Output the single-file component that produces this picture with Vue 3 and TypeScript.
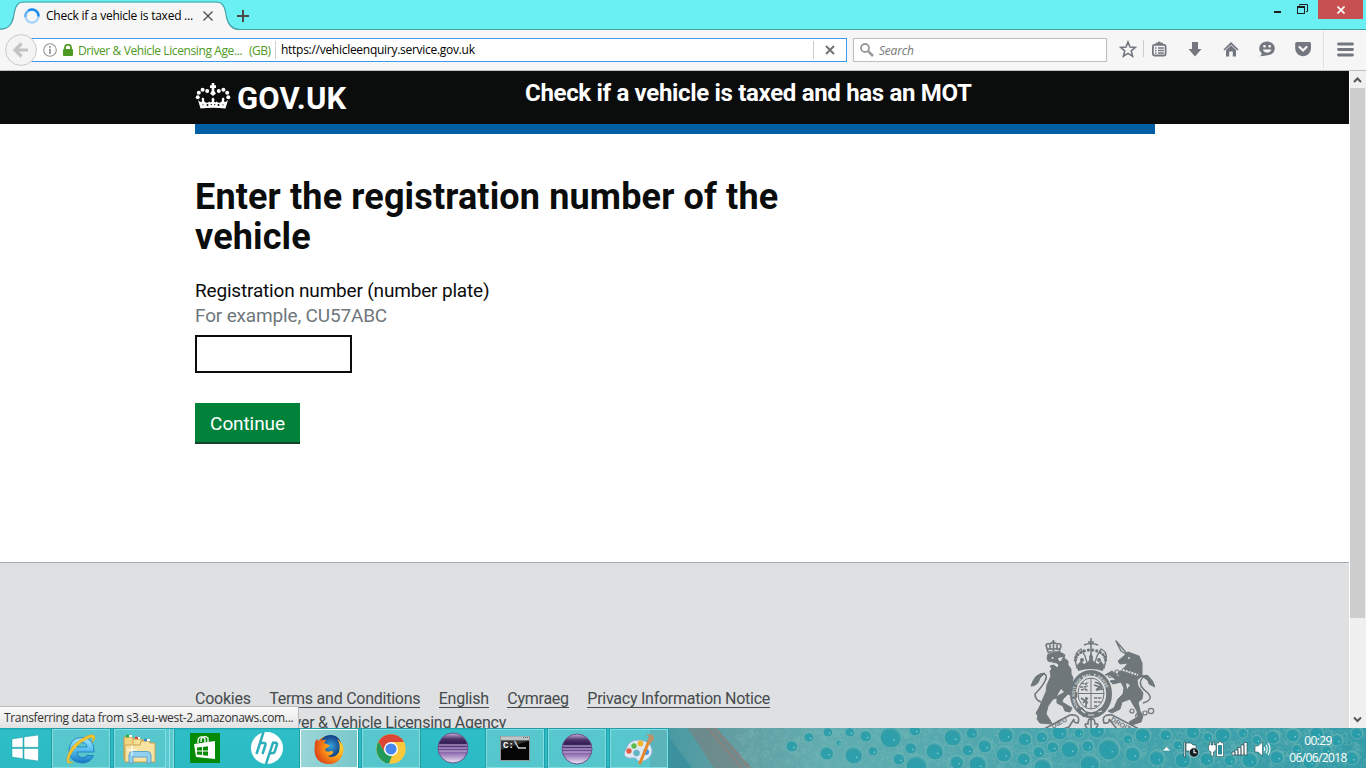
<script setup lang="ts">
import { ref } from 'vue'

interface Bubble { x: number; y: number; r: number }

const registration = ref('')
const footerLinks: string[] = ['Cookies', 'Terms and Conditions', 'English', 'Cymraeg', 'Privacy Information Notice']

const bigBubbles: Bubble[] = [
  [109, 9, 5], [128, 4, 5], [150, 4, 5], [166, 8, 6], [191, 9, 11], [215, 2, 6], [92, 18, 6], [139, 15, 3], [127, 25, 7],
  [154, 27, 9], [173, 23, 5], [211, 20, 6], [199, 31, 6], [235, 23, 9], [253, 9, 9], [272, 5, 6], [268, 22, 6], [285, 18, 7],
  [257, 34, 7], [278, 36, 9], [217, 38, 11], [306, 7, 8], [304, 26, 8], [325, 11, 7], [324, 31, 7], [342, 9, 6], [339, 24, 6],
  [360, 4, 8], [353, 19, 6], [370, 21, 9], [379, 5, 5], [388, 18, 6], [397, 2, 8], [409, 21, 11], [390, 36, 10], [428, 11, 5],
  [433, 26, 8], [443, 7, 8], [343, 39, 9], [466, 7, 6], [478, 17, 5], [493, 4, 7], [508, 9, 5], [523, 7, 8], [543, 5, 5],
  [557, 12, 5], [573, 9, 7], [593, 7, 7], [617, 5, 7], [637, 12, 6], [657, 5, 6], [457, 30, 8], [483, 32, 8], [507, 31, 7],
  [530, 32, 6], [550, 32, 8], [577, 29, 7], [597, 21, 5], [610, 34, 7], [627, 22, 5], [652, 30, 7],
].map(([x, y, r]) => ({ x, y, r }))

const foam: Bubble[] = []
let seed = 17
const rand = (): number => {
  seed = (seed * 16807) % 2147483647
  return seed / 2147483647
}
for (let i = 0; i < 900; i++) {
  foam.push({ x: 40 + rand() * 626, y: rand() * 40, r: 0.6 + rand() * 2.2 })
}

const beads = Array.from({ length: 12 }, (_, i) => {
  const a = Math.PI + (Math.PI * i) / 11
  return { x: 60.5 + 15 * Math.cos(a), y: 22 + 10 * Math.sin(a) }
})
</script>

<template>
  <div class="desktop">
    <div class="window">
      <header class="titlebar">
        <svg class="tab-shape" width="240" height="31" viewBox="0 0 240 31">
          <path d="M0 29.5C9 29.5 12 24 13.500 17C15 7 17 2.500 24 2.500H216C223 2.500 225 7 226.500 17C228 24 231 29.500 240 29.500V31H0Z" fill="#f6f6f6" />
          <path d="M0 29C9 29 12 24 13.500 17C15 7 17 2 24 2H216C223 2 225 7 226.500 17C228 24 231 29.500 240 29.500" fill="none" stroke="#459fa4" stroke-width="1.200" />
        </svg>
        <div class="tab">
          <svg width="16" height="16" viewBox="0 0 16 16" fill="none" stroke-width="2.400">
            <circle cx="8" cy="8" r="6.500" stroke="#a9d4f8" />
            <path d="M4 2.900A6.500 6.500 0 0 1 14.500 8.500" stroke="#1a8cf0" />
            <path d="M4 2.900A6.500 6.500 0 0 0 1.500 9" stroke="#62b2f5" />
          </svg>
          <span class="tab-title">Check if a vehicle is taxed ...</span>
          <svg class="tab-close" width="10" height="10" viewBox="0 0 10 10"><path d="M.5.5L9.500 9.500M9.500.5L.5 9.500" stroke="#4d4d4d" stroke-width="1.300" /></svg>
        </div>
        <svg class="plus" width="12" height="12" viewBox="0 0 12 12"><path d="M6 0V12M0 6H12" stroke="#4a4a4a" stroke-width="2" /></svg>
        <div class="controls">
          <svg width="36" height="16" viewBox="0 0 36 16">
            <path d="M2 12H9" stroke="#1f1f1f" stroke-width="2" />
            <path d="M27.500 5.500V4.500H35.500V11.500H34" stroke="#1f1f1f" fill="none" />
            <rect x="25.500" y="6.500" width="7" height="7" fill="none" stroke="#1f1f1f" /><path d="M25 7H33" stroke="#1f1f1f" stroke-width="2" />
          </svg>
          <button class="close" aria-label="Close">
            <svg width="8" height="8" viewBox="0 0 8 8"><path d="M.5.5L7.500 7.500M7.500.5L.5 7.500" stroke="#fff" stroke-width="1.700" /></svg>
          </button>
        </div>
      </header>

      <nav class="navbar">
        <div class="address">
          <svg class="back" width="32" height="32" viewBox="0 0 32 32">
            <circle cx="16" cy="16" r="15.400" fill="#f4f4f4" stroke="#cacaca" />
            <path d="M9.500 16H23M16.500 9.500L10 16L16.500 22.500" fill="none" stroke="#c3c3c3" stroke-width="3.200" />
          </svg>
          <svg class="info" width="14" height="14" viewBox="0 0 14 14"><circle cx="7" cy="7" r="6.300" fill="none" stroke="#969696" stroke-width="1.100" /><path d="M7 3V4.800M7 5.800V11" stroke="#8c8c8c" stroke-width="1.600" /></svg>
          <svg class="lock" width="10" height="12" viewBox="0 0 10 12"><rect y="5" width="10" height="7" rx="1" fill="#4d9a24" /><path d="M2 6V3.500A3 2.800 0 0 1 8 3.500V6" fill="none" stroke="#4d9a24" stroke-width="1.800" /></svg>
          <span class="owner">Driver &amp; Vehicle Licensing Age...</span>
          <span class="country">(GB)</span>
          <span class="url">https://vehicleenquiry.service.gov.uk</span>
          <span class="stop"><svg width="10" height="10" viewBox="0 0 10 10"><path d="M1 1L9 9M9 1L1 9" stroke="#737373" stroke-width="2" /></svg></span>
        </div>
        <div class="search">
          <svg width="14" height="14" viewBox="0 0 14 14" fill="none" stroke="#999"><circle cx="5" cy="5" r="4" stroke-width="1.800" /><path d="M8.300 8.300L13 13" stroke-width="2.500" /></svg>
          <span>Search</span>
        </div>
        <svg class="tools" width="253" height="39" viewBox="0 0 253 39">
          <path d="M15 12L17 17L22.300 17.400L18.300 20.900L19.600 26.200L15 23.400L10.400 26.200L11.700 20.900L7.700 17.400L13 17Z" fill="none" stroke="#737780" stroke-width="1.600" />
          <path d="M30.500 10V27" stroke="#cbcdd0" />
          <rect x="39.900" y="14.900" width="12.700" height="10.600" rx="1.500" fill="none" stroke="#737780" stroke-width="1.800" />
          <path d="M42.500 15V12.800H44.500Q46.200 10 48 12.800H50V15Z" fill="#737780" />
          <path d="M42 18H43.500M45 18H50.800M42 20.500H43.500M45 20.500H50.800M42 23H43.500M45 23H50.800" stroke="#737780" stroke-width="1.300" />
          <path d="M79 12H85V19H88.500L82 26.500L75.500 19H79Z" fill="#737780" />
          <g transform="translate(4 0)">
            <path d="M107 20L114 13.300L121 20" fill="none" stroke="#737780" stroke-width="1.700" />
            <path d="M109 20L114 15.300L119 20V26.500H115.800V21.500H112.200V26.500H109Z" fill="#737780" />
            <path d="M150 11.500C154.500 11.500 157.800 14.500 157.800 18.500C157.800 22.800 154 25.200 150.500 25.200C149 25.200 146.500 26.200 143 26.200C144.500 25 145 24 144.500 23C143 21.800 142.300 20.500 142.300 18.500C142.300 14.500 145.500 11.500 150 11.500Z" fill="#737780" />
            <circle cx="147.500" cy="16.300" r="1.300" fill="#f6f6f6" /><circle cx="152.700" cy="16.300" r="1.300" fill="#f6f6f6" /><path d="M145.800 19.500H154.500C153.500 23.600 146.800 23.600 145.800 19.500Z" fill="#f6f6f6" />
          </g>
          <g transform="translate(8 0)">
            <path d="M176 12H188.500Q190 12 190 13.500V18C190 23 186 26.200 182.200 26.200C178 26.200 174.200 23 174.200 18V13.500Q174.200 12 176 12Z" fill="#737780" />
            <path d="M178.500 17L182 20.500L185.500 17" fill="none" stroke="#f6f6f6" stroke-width="2.200" stroke-linecap="round" />
            <path d="M202.500 1V38" stroke="#dedede" />
            <path d="M217.500 14H231.500M217.500 19.500H231.500M217.500 25H231.500" stroke="#737780" stroke-width="2.800" stroke-linecap="round" />
          </g>
        </svg>
      </nav>

      <div class="viewport">
        <main class="page">
          <div class="gov-header">
            <div class="container head-row">
              <div class="brand">
                <svg width="36" height="27" viewBox="0 0 36 27" fill="#fff">
                  <path d="M5.500 25.600L3 17Q5 19.500 6.500 19L7 17.500Q5.800 15.500 8 14.600Q10 15.500 9 17.500L10 19.300Q12.500 20.500 14.500 18.500L15.500 19.500L17 18.500L16.500 16L18 14.500L19.500 16L19 18.500L20.500 19.500L21.500 18.500Q23.500 20.500 26 19.300L27 17.500Q26 15.500 28 14.600Q30.200 15.500 29 17.500L29.500 19Q31 19.500 33 17L30.500 25.600Q18 24 5.500 25.600Z" />
                  <path d="M18 0V10M15 3.600H21" stroke="#fff" stroke-width="2.600" />
                  <path d="M18 6.500L21 10.500L18 13L15 10.500Z" />
                  <circle cx="2.700" cy="14.200" r="2" /><circle cx="3.800" cy="9.800" r="2" /><circle cx="7.600" cy="6.800" r="2" /><circle cx="12.200" cy="8" r="2" />
                  <circle cx="33.300" cy="14.200" r="2" /><circle cx="32.200" cy="9.800" r="2" /><circle cx="28.400" cy="6.800" r="2" /><circle cx="23.800" cy="8" r="2" />
                  <g fill="#0b0c0c"><circle cx="12.500" cy="22" r="1" /><circle cx="23.500" cy="22" r="1" /><circle cx="16.300" cy="21.600" r=".7" /><circle cx="19.700" cy="21.600" r=".7" /><circle cx="8" cy="21.800" r=".6" /><circle cx="28" cy="21.800" r=".6" /></g>
                </svg>
                <span>GOV.UK</span>
              </div>
              <div class="service">Check if a vehicle is taxed and has an MOT</div>
            </div>
          </div>
          <div class="container content">
            <div class="bar"></div>
            <h1>Enter the registration number of the<br />vehicle</h1>
            <label for="vrm">Registration number (number plate)</label>
            <div class="hint">For example, CU57ABC</div>
            <input id="vrm" v-model="registration" type="text" />
            <button class="continue"><span>Continue</span></button>
          </div>
          <footer class="footer">
            <div class="container foot-row">
              <div>
                <div class="links"><a v-for="link in footerLinks" :key="link">{{ link }}</a></div>
                <div class="built">Built by the <a>Driver &amp; Vehicle Licensing Agency</a></div>
              </div>
              <svg class="arms" width="125" height="91" viewBox="0 0 125 91" fill="#6f777b">
                <g stroke="#6f777b" stroke-linejoin="round">
                  <path d="M18 14L16 7Q17 5 20 6L23 4L27 6Q31 5 31 8L29 14Z" fill="none" stroke-width="1.600" />
                  <path d="M23.500 2V13M18 11H30M20 7V12M27 7V12" fill="none" stroke-width="1.600" />
                  <path d="M18 16L30 14L35 17L34 20L38 23L38 27L41 31L41 36L43 40L42 47L39 50L37 57L33 61L32 64L37 67L42 70L40 74L35 73L33 68L27 65L27 60L23 61L18 68L16 76L20 82L22 86L10 85L7 81L8 78L6 75L9 70L12 63L16 54L17 47L21 38L20 33L22 31L20 28L24 27L27 30L29 27L27 25L18 23L17 20Z" stroke-width="1" />
                  <path d="M11 64Q5 62 5 56Q12 49 15 43Q18 37 14 36Q10 36 5 40" fill="none" stroke-width="1.600" /><path d="M15 35Q5 35 1 48Q8 48 10 40Z" />
                  <path d="M36 44L49 57L46 60L36 55Z" />
                  <path d="M86 3L99 18L91 13Z" fill="none" stroke-width="1.400" />
                  <path d="M98 14L109 18L112 25L112 38L107 42L108 48L113 55L112 61L108 64L110 73L113 78L111 84L102 87L99 84L108 79L107 73L104 68L100 61L92 64L90 71L82 75L78 73L84 70L88 61L93 56L94 50L91 44L83 46L80 43L86 42L80 37L75 37L82 33L90 40L88 35L95 29L98 25L90 26L88 23L94 18Z" stroke-width="1" />
                  <path d="M113 65Q124 62 118 55Q108 48 111 42Q115 35 119 39" fill="none" stroke-width="1.500" /><path d="M110 38Q121 35 125 49L119 46Q119 41 110 38Z" />
                </g>
                <g fill="#dee0e2"><circle cx="22.500" cy="20" r="1" /><path d="M28 20L33 19L31 23L29 23Z" /><circle cx="99" cy="20" r="1" /><path d="M31 51L27 58L34 54Z M96 45L100 47L97 51Z" /></g>
                <path d="M90 31L108 37" stroke="#dee0e2" stroke-width="2" stroke-dasharray="2 1" />
                <g fill="none" stroke="#6f777b" stroke-width="1.200"><circle cx="80" cy="38" r="1.500" /><circle cx="87" cy="34" r="2" /><circle cx="109" cy="53" r="2" /><circle cx="102" cy="73" r="2" /><circle cx="108" cy="78" r="2.300" /><circle cx="115" cy="75" r="2" /><circle cx="121" cy="73" r="2.700" /><circle cx="106" cy="65" r="2" /></g>
                <circle v-for="(bead, i) in beads" :key="i" :cx="bead.x" :cy="bead.y" r="1.600" />
                <path d="M61 0V30M58 4H64M54 7Q60.500 4 68 7" fill="none" stroke="#6f777b" stroke-width="1.500" />
                <path d="M47 30L45 22Q45 14 51 11L55 18L58 28L61 17L64 28L67 18L71 11Q78 14 76 22L74 30Z" fill="none" stroke="#6f777b" stroke-width="1.300" />
                <path d="M47 27L51 23L54 26L61 22L68 26L71 23L74 27L73 33Q61 29 48 33Z" />
                <circle cx="52" cy="22" r="2" /><circle cx="69" cy="22" r="2" /><circle cx="61" cy="19" r="2" />
                <ellipse cx="61" cy="56" rx="20" ry="23" fill="none" stroke="#6f777b" stroke-width="2" />
                <ellipse cx="61" cy="56" rx="17.500" ry="20.500" fill="none" stroke="#6f777b" stroke-width="4.600" />
                <path id="garter" d="M49 70A16.200 19 0 1 1 73 70" fill="none" />
                <text class="motto"><textPath href="#garter">HONI SOIT QUI MAL Y PENSE</textPath></text>
                <ellipse cx="61" cy="55.500" rx="14" ry="16.500" fill="#dee0e2" />
                <ellipse cx="61" cy="55.500" rx="13" ry="15.500" fill="none" stroke="#6f777b" />
                <path d="M61 40V71M48 55.500H74" stroke="#6f777b" stroke-width="1" />
                <g fill="none" stroke="#6f777b" stroke-width="1.700"><path d="M51 45L56 46L58 44M50 49H54L58 48M51 52L55 51L58 53M64 60H72M64 64H71M64 68H68" stroke-dasharray="3 .7" /><path d="M65 44L70 46L72 51L66 52L70 49L64 47M51 60L58 65M53 65L58 60M56 59V69" /></g>
                <path d="M47 70L52 69L57 75H64L70 70L76 73L68 79H53Z" /><path d="M51 72L55 75M58 77H64M68 74L72 73" stroke="#dee0e2" stroke-width="1.200" />
                <path d="M14 91L40 77Q51 76 48 85Q43 85 44 81L39 89L33 91ZM109 91L82 77Q71 76 74 85Q80 86 79 81L87 91Z" fill="#dee0e2" stroke="#6f777b" stroke-width="1.600" />
                <text class="dieu" transform="translate(23 91) rotate(-29)">DIEU</text><text class="dieu" transform="translate(80 83) rotate(29)">DROIT</text>
                <path d="M57 90Q53 85 58 86Q58 80 61 81Q65 80 65 86Q70 85 66 90M61 81V91" fill="none" stroke="#6f777b" stroke-width="1.600" />
              </svg>
            </div>
          </footer>
        </main>
        <div class="scrollbar">
          <svg width="17" height="17" viewBox="0 0 17 17"><path d="M4 11L7.500 7.500L11 11" fill="none" stroke="#555" stroke-width="2" /></svg>
          <div class="thumb"></div>
          <svg width="17" height="17" viewBox="0 0 17 17"><path d="M4 6.500L7.500 10L11 6.500" fill="none" stroke="#555" stroke-width="2" /></svg>
        </div>
        <div class="status"><span>Transferring data from s3.eu-west-2.amazonaws.com...</span></div>
      </div>
    </div>

    <div class="taskbar">
      <svg class="wallpaper" width="716" height="40" viewBox="-50 0 716 40">
        <defs>
          <linearGradient id="sea" x1="0" x2="1"><stop offset="0" stop-color="#4298a2" /><stop offset=".12" stop-color="#639fa3" /><stop offset=".25" stop-color="#61adb0" /><stop offset=".55" stop-color="#4aa5ad" /><stop offset="1" stop-color="#349ca8" /></linearGradient>
          <radialGradient id="bubble" cx=".45" cy=".6" r=".6"><stop offset="0" stop-color="#209fad" /><stop offset=".7" stop-color="#2b9ba7" /><stop offset="1" stop-color="#6ab6b7" /></radialGradient>
        </defs>
        <rect x="-50" width="716" height="40" fill="url(#sea)" />
        <path d="M-50 0H-38L-8 40H-50Z" fill="#3b929e" /><path d="M-12 0H16L52 40H14Z" fill="#79817f" opacity=".65" />
        <g stroke="#678f92" fill="none"><path d="M-8 0L22 40M0 0L32 40" /><path d="M8 0L42 40M15 0L50 40" stroke="#947d78" stroke-width="1.500" opacity=".8" /></g>
        <g fill="none" stroke="#81bdbb" stroke-width=".6" opacity=".55"><circle v-for="(b, i) in foam" :key="i" :cx="b.x" :cy="b.y" :r="b.r" /></g>
        <g v-for="(b, i) in bigBubbles" :key="i">
          <circle :cx="b.x" :cy="b.y" :r="b.r" fill="url(#bubble)" stroke="#72b7b7" stroke-width=".8" opacity=".85" />
          <circle :cx="b.x + b.r * 0.3" :cy="b.y + b.r * 0.25" r=".8" fill="#a9dcda" opacity=".8" />
        </g>
      </svg>

      <div class="apps">
        <div class="app start">
          <svg width="28" height="26" viewBox="0 0 28 26" fill="#fff" stroke="#1a99a3" stroke-width=".5"><path d="M1 4L12 2.200V12.300H1ZM13 2L27.500 0V12.300H13ZM1 13.500H12V23.800L1 22ZM13 13.500H27.500V26L13 24Z" /></svg>
        </div>
        <div class="app tile">
          <svg width="32" height="32" viewBox="0 0 32 32">
            <defs><linearGradient id="ieBlue" x2="0" y2="1"><stop stop-color="#a7e9ff" /><stop offset=".5" stop-color="#52bdf0" /><stop offset="1" stop-color="#1678c4" /></linearGradient></defs>
            <path d="M29 19H12Q13 24.500 17.500 24.500Q20.500 24.500 22 22.500H28.500Q25.500 30 17 30Q4 29 4 17Q5 4.500 17 4.500Q29.500 5 29 19ZM12 14H22Q21.500 9.500 17 9.500Q12.500 9.500 12 14Z" fill="url(#ieBlue)" stroke="#1676b9" stroke-width=".8" />
            <path d="M8 29Q1 33 2 25Q5 11 22 3Q29 0 30 4Q30 7 27 10Q30 3 24 5Q10 11 4 25Q3 30 8 29Z" fill="#f6c630" stroke="#d9a31c" stroke-width=".5" />
          </svg>
        </div>
        <div class="app tile explorer">
          <svg width="34" height="32" viewBox="0 0 34 32">
            <path d="M2 4H10L12 7H24V26H2Z" fill="#f3d581" stroke="#c69c45" /><path d="M11 6H19L21 9H28V26H11Z" fill="#f7df94" stroke="#cda653" />
            <path d="M19 8H27L28 10H33V29H3V12H18Z" fill="#f8e3a2" stroke="#c8a24f" />
            <path d="M5 3H10M14 5H18M22 7H28" stroke="#fff" stroke-width="2" /><path d="M4 3H7" stroke="#24a93b" stroke-width="2.500" /><path d="M13 5H16" stroke="#dd4d38" stroke-width="2.500" /><path d="M22 7H25" stroke="#3a88ce" stroke-width="2.500" />
            <path d="M7 30V22Q7 18.500 11 18.500H25Q29 18.500 29 22V30H25V24H11V30Z" fill="#93cfef" stroke="#5da4ca" /><path d="M10 12V22M5 17H15" stroke="#fff" stroke-width="1" />
          </svg>
        </div>
        <div class="stack"></div><div class="stack"></div>
        <div class="app store">
          <svg width="30" height="30" viewBox="0 0 30 30"><rect width="30" height="30" fill="#048a05" /><path d="M4 11L25 8V26L6 24Z" fill="#fff" /><path d="M8 10V7Q9 3 13 4L15 6V10M11 9V6Q14 2 18 5V9" fill="none" stroke="#fff" stroke-width="1.300" /><path d="M7 14.500L12 14V17.500H7ZM13 13.900L18 13.300V17.500H13ZM7 18.500H12V22L7 21.500ZM13 18.500H18V22.700L13 22.200Z" fill="#048a05" /></svg>
        </div>
        <div class="app hp">
          <svg width="32" height="32" viewBox="0 0 32 32">
            <circle cx="16" cy="16" r="16" fill="#fff" />
            <path d="M12.500 0L5.500 22M9.500 11H13Q15 11 14.300 13.500L11.500 22M15 32L22 10.800H24.500Q26.500 10.800 25.800 13L24 19Q23.300 21.300 21 21.300H18.500" fill="none" stroke="#2cafba" stroke-width="2.500" />
          </svg>
        </div>
        <div class="app tile active">
          <svg width="30" height="30" viewBox="0 0 30 30">
            <defs><radialGradient id="fox" cx=".8" cy=".35" r=".85"><stop stop-color="#ffe23e" /><stop offset=".45" stop-color="#ff9d18" /><stop offset="1" stop-color="#d93d16" /></radialGradient><radialGradient id="globe"><stop stop-color="#39a5db" /><stop offset="1" stop-color="#103b83" /></radialGradient></defs>
            <circle cx="15" cy="16" r="14" fill="url(#fox)" /><circle cx="16.500" cy="12" r="11" fill="url(#globe)" />
            <path d="M1 8L3 5L5 8Q8 5 12 6L10 9L15 11Q16 13 12 14L11 16Q13 19 17 17Q20 17 19 19Q17 22 14 22Q20 26 25 18Q27 10 23 5Q30 9 29.500 17Q27 29 16 30Q1 30 .5 16Z" fill="url(#fox)" />
          </svg>
        </div>
        <div class="app tile">
          <svg width="30" height="30" viewBox="0 0 30 30"><circle cx="15" cy="15" r="14.700" fill="#f9c83c" /><path d="M2.300 7.700Q7 .3 15 .3Q24 .3 27.800 8H15L9 18Z" fill="#dc4637" /><path d="M2.300 7.700L9 18.500Q12 22 16 21.500L13 29.600Q4 28.500 1 19Q-.5 13 2.300 7.700Z" fill="#20995b" /><circle cx="15" cy="15" r="7" fill="#fff" /><circle cx="15" cy="15" r="5.600" fill="#4686ed" /></svg>
        </div>
        <div class="app eclipse">
          <svg width="32" height="32" viewBox="0 0 32 32">
            <defs><linearGradient id="orb" x2="0" y2="1"><stop stop-color="#c9b5dc" /><stop offset=".2" stop-color="#4a3268" /><stop offset=".32" stop-color="#352056" /><stop offset=".5" stop-color="#5c3c84" /><stop offset=".7" stop-color="#9a78b8" /><stop offset="1" stop-color="#efe8f6" /></linearGradient></defs>
            <circle cx="16" cy="16" r="15" fill="url(#orb)" stroke="#6c538a" /><path d="M2 13H30M1.500 16H30.500M2 19H30" stroke="#cdbbe0" stroke-width="1" />
          </svg>
        </div>
        <div class="app tile">
          <svg width="30" height="26" viewBox="0 0 30 26"><rect x=".5" y=".5" width="29" height="24" fill="#050505" stroke="#8f9697" /><path d="M1 2.500H29" stroke="#bfc5c7" stroke-width="4" /><path d="M23 1.500H24M25 1.500H26M27 1.500H28" stroke="#376a89" /><path d="M1 5H28L1 14Z" fill="#333" /><text class="prompt" x="3" y="12">C:\</text><path d="M18 12H26" stroke="#fff" stroke-width="1.200" /></svg>
        </div>
        <div class="app tile">
          <svg width="32" height="32" viewBox="0 0 32 32"><circle cx="16" cy="16" r="15" fill="url(#orb)" stroke="#6c538a" /><path d="M2 13H30M1.500 16H30.500M2 19H30" stroke="#cdbbe0" stroke-width="1" /></svg>
        </div>
        <div class="app tile">
          <svg width="32" height="32" viewBox="0 0 32 32"><path d="M3 16Q6 6 17 7Q27 8 29 16Q30 23 23 27Q16 30 14 27Q13 24 10 25Q1 26 1 20Z" fill="#dcebf6" stroke="#8bb4cf" /><circle cx="13.500" cy="20" r="3" fill="#57b8c3" stroke="#8bb4cf" /><circle cx="6" cy="18" r="2.700" fill="#e45c43" /><circle cx="11" cy="13" r="2.700" fill="#63b94e" /><circle cx="17.500" cy="10.500" r="2.900" fill="#f3b62d" /><circle cx="23" cy="19" r="3" fill="#4994df" /><path d="M26 8L17 30" stroke="#e68829" stroke-width="3" stroke-linecap="round" /><path d="M23 1L30 2L31 6L28 10L24 8L26 4Z" fill="#bd9068" /></svg>
        </div>
      </div>

      <div class="tray">
        <svg width="114" height="20" viewBox="0 0 114 20">
          <path d="M.5 12L4.500 7.500L8.500 12Z" fill="#fff" stroke="#2a8490" stroke-width=".5" />
          <g stroke="#143c43" stroke-width=".6" fill="#fff"><path d="M22 3H23.500V18H22ZM24 4H29L31 6H34V12H24Z" /><circle cx="32" cy="13.500" r="4.700" fill="#101f23" stroke="#fff" /><path d="M32 10.500V13.500L34.500 14" fill="none" stroke="#fff" stroke-width="1.200" /></g>
          <g stroke="#143c43" stroke-width=".5" fill="#fff"><path d="M47.500 3H49V6H51V3H52.500V6H54V11L51.500 13V17H49V13L46.500 11V6H47.500ZM54.500 4H57V2.500H59.500V4H61.500V17.500H54.500Z" /></g><rect x="56" y="6" width="4" height="9.500" fill="#2e8c98" />
          <g fill="#fff" stroke="#143c43" stroke-width=".6"><path d="M70 13H73V16H70ZM73 11H76V16H73ZM76 8.500H79V16H76ZM79 6H82V16H79ZM82 3.500H85V16H82Z" /></g>
          <g transform="translate(-1.500 0)"><path d="M94.500 7H97.500L102 3V17L97.500 13H94.500Z" fill="#fff" stroke="#143c43" stroke-width=".5" /><path d="M103.500 8Q105 10 103.500 12M105.500 6Q108 10 105.500 14M107.500 4Q111.500 10 107.500 16" fill="none" stroke="#fff" stroke-width="1.100" /></g>
        </svg>
        <div class="clock"><span class="time">00:29</span><span>06/06/2018</span></div>
      </div>
    </div>
  </div>
</template>

<style>
body { margin: 0; overflow: hidden; }
</style>

<style scoped>
* { box-sizing: border-box; }
.desktop { width: 1366px; height: 768px; display: flex; flex-direction: column; overflow: hidden; font: 12px "Open Sans", "Noto Sans", sans-serif; color: #111; }
svg { display: block; flex: none; }
.window { height: 728px; display: flex; flex-direction: column; }
.titlebar { height: 30px; flex: none; position: relative; display: flex; background: #6aeff3; border-bottom: 1px solid #459fa4; }
.tab-shape { position: absolute; left: 0; top: 0; }
.tab { position: relative; display: flex; width: 236px; height: 30px; padding: 8px 0 0 24px; }
.tab-title { width: 147px; margin: -1px 0 0 6px; line-height: 18px; white-space: nowrap; letter-spacing: -.24px; font-size: 12px; color: #000; }
.tab-close { margin: 3px 0 0 10px; }
.plus { margin: 10px 0 0 1px; }
.controls { margin-left: auto; display: flex; width: 94px; }
.close { margin-left: 10px; width: 45px; height: 19px; border: 0; padding: 0; background: #c75050; display: flex; align-items: center; justify-content: center; }
.navbar { height: 41px; flex: none; background: #f6f6f6; border-bottom: 1px solid #bfc3bf; display: flex; align-items: flex-start; }
.address { margin: 8px 0 0 20px; width: 827px; height: 24px; border: 1px solid #3e99f0; background: #fff; display: flex; align-items: center; white-space: nowrap; }
.back { margin-left: -16px; }
.info { margin-left: 6px; }
.lock { margin: -1px 0 0 6px; }
.owner { width: 166px; margin-left: 5px; color: #4d9a24; font-size: 12px; letter-spacing: -.4px; }
.country { color: #4d9a24; font-size: 12px; width: 26px; padding-right: 5px; margin-left: 5px; letter-spacing: -.5px; }
.url { border-left: 1px solid #d0d0d0; padding-left: 5px; line-height: 18px; font-size: 12px; letter-spacing: -.28px; color: #000; }
.stop { margin-left: auto; width: 33px; height: 18px; border-left: 1px solid #ccc; display: flex; align-items: center; justify-content: center; }
.search { margin: 8px 0 0 6px; width: 254px; height: 24px; border: 1px solid #b9bec7; background: #fff; display: flex; align-items: center; padding-left: 6px; gap: 5px; font-size: 12px; font-style: italic; color: #777; letter-spacing: -.2px; }
.tools { margin-left: 6px; }
.viewport { position: relative; flex: 1; min-height: 0; display: flex; overflow: hidden; font-family: Roboto, sans-serif; }
.page { width: 1349px; background: #fff; display: flex; flex-direction: column; }
.container { width: 960px; margin-left: 195px; }
.gov-header { height: 53px; background: #0b0c0c; flex: none; }
.head-row { display: flex; color: #fff; font-weight: 700; }
.brand { width: 330px; display: flex; font-size: 31px; line-height: 30px; padding-top: 12px; letter-spacing: .2px; }
.brand span { margin: 1px 0 0 6px; }
.service { font-size: 24px; line-height: 30px; margin-top: 7px; letter-spacing: -.32px; white-space: nowrap; }
.content { height: 438px; display: flex; flex-direction: column; align-items: flex-start; color: #0b0c0c; }
.bar { width: 960px; height: 10px; background: #005ea5; }
h1 { margin: 43px 0 0; font-size: 36px; line-height: 40px; font-weight: 700; white-space: nowrap; letter-spacing: .14px; }
label { margin-top: 21px; font-size: 19px; line-height: 25px; letter-spacing: -.18px; }
.hint { color: #6f777b; font-size: 19px; line-height: 25px; letter-spacing: -.16px; }
input { width: 157px; height: 38px; margin-top: 7px; border: 2px solid #0b0c0c; border-radius: 0; outline: 0; background: #fff; padding: 4px; font-size: 19px; }
.continue { width: 105px; height: 41px; margin-top: 30px; padding: 1px 0 0; background: #00823b; border: 0; border-bottom: 2px solid #14432a; color: #fff; font: 19px Roboto, sans-serif; letter-spacing: -.1px; }
.footer { flex: 1; min-height: 0; background: #dee0e2; border-top: 1px solid #a1acb2; color: #454a4c; overflow: hidden; }
.foot-row { display: flex; justify-content: space-between; white-space: nowrap; letter-spacing: -.25px; }
.links { display: flex; gap: 18.500px; padding-top: 128px; font-size: 16px; line-height: 16px; }
.links a { border-bottom: 1px solid #454a4c; height: 17px; }
.built { margin-top: 5px; font-size: 16px; line-height: 20px; }
.built a { text-decoration: underline; }
.arms { margin-top: 75px; }
.motto { font: 700 4px "Liberation Sans", sans-serif; fill: #dee0e2; letter-spacing: .2px; }
.dieu { font: 700 7px "Liberation Sans", sans-serif; letter-spacing: 0; }
.scrollbar { width: 17px; background: #f0f0f0; border-left: 1px solid #fff; display: flex; flex-direction: column; }
.thumb { width: 15px; height: 530px; background: #cdcdcd; margin-bottom: auto; }
.status { position: absolute; left: 0; bottom: 0; width: 299px; height: 22px; border-top: 1px solid #bbb; border-right: 1px solid #bbb; border-top-right-radius: 2px; background: linear-gradient(#fbfbfb, #e2e2e2); font: 12px/21px "Open Sans", sans-serif; padding-left: 4px; color: #333; white-space: nowrap; letter-spacing: -.34px; }
.taskbar { height: 40px; position: relative; background: linear-gradient(#179eaa, #2dbec7 2px, #2bbac4); display: flex; justify-content: space-between; }
.wallpaper { position: absolute; right: 0; top: 0; }
.apps { position: relative; display: flex; }
.app { width: 58px; height: 40px; display: flex; align-items: center; justify-content: center; flex: none; }
.tile { height: 39px; margin: 1px 4px 0 0; border: 1px solid #83dce0; background: rgba(121, 207, 211, .55); box-shadow: 0 0 0 1px #219da6; }
.start { width: 52px; padding-right: 2px; }
.explorer { width: 52px; margin-right: 0; padding-right: 3px; }
.stack { width: 4px; height: 39px; margin-top: 1px; background: #5ac9d0; border-right: 1px solid #8fe0e3; box-shadow: 1px 0 #219da6; }
.store { width: 62px; }
.hp { width: 62px; margin-right: 2px; }
.active { background: linear-gradient(100deg, #9dd6d8, #76c7cb); border-color: #effbfb; }
.eclipse { width: 62px; padding-right: 4px; }
.prompt { font: 700 9px "Liberation Mono", monospace; fill: #fff; }
.tray { position: relative; width: 209px; display: flex; color: #fff; }
.tray > svg { margin: 11px 0 0 5px; }
.clock { width: 82px; padding-left: 2px; display: flex; flex-direction: column; align-items: center; font-size: 12px; line-height: 17px; padding-top: 4px; letter-spacing: -.6px; }
</style>
